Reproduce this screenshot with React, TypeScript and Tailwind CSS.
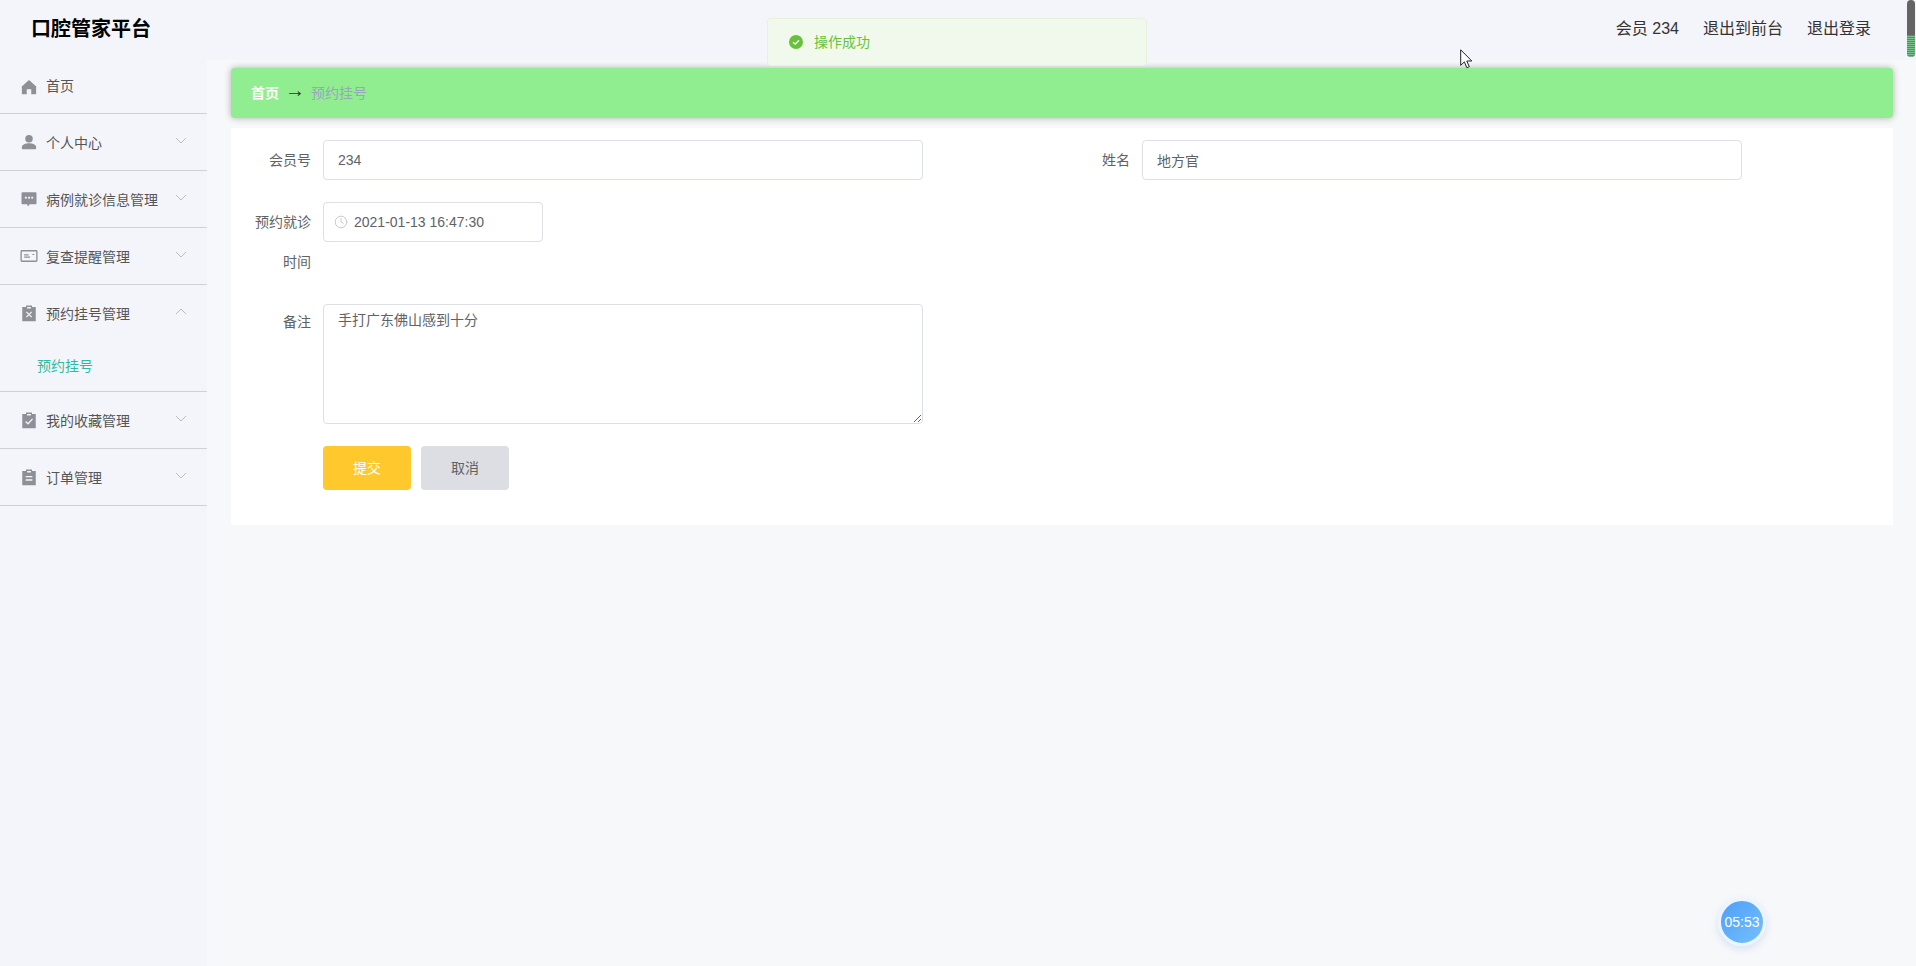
import { Clock } from "lucide-react";
import type { ReactNode } from "react";

const HomeIcon = () => (
  <svg viewBox="0 0 24 24" className="size-[18px] fill-[#8e9097]">
    <path d="M12 2.500 2 11.500 2.500 12.500V21.500h6.500v-6.500h6v6.500h6.500V12.500l.5-1z" />
  </svg>
);

const UserIcon = () => (
  <svg viewBox="0 0 24 24" className="size-[18px] fill-[#8e9097]">
    <circle cx="12" cy="7.500" r="5" />
    <path d="M2.500 20.500v-2c0-3.200 5-5 9.500-5s9.500 1.800 9.500 5v2c0 .6-.4 1-1 1h-17c-.6 0-1-.4-1-1z" />
  </svg>
);

const ChatIcon = () => (
  <svg viewBox="0 0 24 24" className="size-[18px]">
    <path
      className="fill-[#8e9097]"
      d="M3.500 3h17c.8 0 1.500.7 1.500 1.500v13c0 .8-.7 1.500-1.500 1.500H13l-2.500 3-1-3h-6C2.700 19 2 18.300 2 17.500v-13C2 3.700 2.700 3 3.500 3z"
    />
    <rect x="6.500" y="9" width="2.500" height="2.500" fill="#f4f5fa" />
    <rect x="10.800" y="9" width="2.500" height="2.500" fill="#f4f5fa" />
    <rect x="15" y="9" width="2.500" height="2.500" fill="#f4f5fa" />
  </svg>
);

const CardIcon = () => (
  <svg viewBox="0 0 24 24" className="size-[18px] fill-none stroke-[#8e9097]">
    <rect x="1.500" y="5" width="21" height="14" rx="1" strokeWidth="1.800" />
    <path d="M5.500 13.500h8M5.500 10.500h6M16.500 10h2.500" strokeWidth="1.600" />
  </svg>
);

function ClipboardIcon({ mark }: { mark: ReactNode }) {
  return (
    <svg viewBox="0 0 24 24" className="size-[18px]">
      <path
        className="fill-[#8e9097]"
        d="M3 4h5V2h8v2h5v19H3zM9.500 4v2h5V4z"
      />
      <g fill="none" stroke="#f4f5fa" strokeWidth="1.700">
        {mark}
      </g>
    </svg>
  );
}

function Chevron({ up }: { up?: boolean }) {
  return (
    <svg
      viewBox="0 0 12 7"
      className={
        up
          ? "mb-1 h-[7px] w-3 rotate-180 fill-none stroke-[#b4b6bc]"
          : "mb-1 h-[7px] w-3 fill-none stroke-[#b4b6bc]"
      }
    >
      <path d="M1 1l5 5 5-5" strokeWidth="0.9" />
    </svg>
  );
}

const menu = [
  { name: "个人中心", icon: <UserIcon /> },
  { name: "病例就诊信息管理", icon: <ChatIcon /> },
  { name: "复查提醒管理", icon: <CardIcon /> },
  {
    name: "预约挂号管理",
    icon: <ClipboardIcon mark={<path d="M8.500 10.500l7 7M15.500 10.500l-7 7" />} />,
    open: true,
    sub: "预约挂号",
  },
  {
    name: "我的收藏管理",
    icon: <ClipboardIcon mark={<path d="M7.500 14l3.200 3 6-6.500" />} />,
  },
  {
    name: "订单管理",
    icon: <ClipboardIcon mark={<path d="M7.500 11.500h9M7.500 16h9" />} />,
  },
];

function Sidebar() {
  return (
    <aside className="w-[207px] shrink-0 text-sm text-[#555]">
      <div className="flex h-[54px] items-center gap-2 border-b border-[#cfd1d7] pl-5">
        <HomeIcon />
        <span className="mb-[2px]">首页</span>
      </div>
      {menu.map((item) => (
        <div key={item.name} className="border-b border-[#cfd1d7]">
          <div className="flex h-[56px] items-center gap-2 pr-[20px] pl-5">
            {item.icon}
            <span className="mt-[1px] flex-1">{item.name}</span>
            <Chevron up={item.open} />
          </div>
          {item.sub && (
            <div className="flex h-[50px] items-center pb-[1px] pl-[37px] text-[#2fbaa0]">
              {item.sub}
            </div>
          )}
        </div>
      ))}
    </aside>
  );
}

function FormItem({
  label,
  className,
  children,
}: {
  label: string;
  className?: string;
  children: ReactNode;
}) {
  return (
    <div className={"flex " + (className ?? "")}>
      <label className="w-[80px] shrink-0 pr-3 text-right text-sm leading-[40px] text-[#606266]">
        {label}
      </label>
      {children}
    </div>
  );
}

const inputCls =
  "h-10 w-[600px] rounded border border-[#dcdfe6] bg-white px-[14px] text-sm text-[#606266] outline-none";

export default function App() {
  return (
    <div className="relative flex h-screen flex-col overflow-hidden bg-[#f4f5fa] font-['Liberation_Sans','Noto_Sans_CJK_SC',sans-serif]">
      <header className="flex h-[60px] shrink-0 items-center justify-between pr-[45px] pb-[3px] pl-[31px]">
        <h1 className="text-xl font-bold text-black">口腔管家平台</h1>
        <div className="flex gap-6 text-base text-[#333]">
          <span>会员&nbsp;234</span>
          <span>退出到前台</span>
          <span>退出登录</span>
        </div>
      </header>

      <div className="flex flex-1">
        <Sidebar />
        <main className="flex-1 bg-[#f7f8fa] pt-2 pr-[23px] pl-6">
          <div className="relative flex h-[50px] items-center rounded-sm bg-[#90ee90] px-5 text-sm shadow-[0_0_7px_rgba(0,0,0,0.3)]">
            <span className="font-bold text-white">首页</span>
            <span className="mx-[9px] mb-[6px] flex w-[14px] justify-center text-xl leading-none text-[#303133]">→</span>
            <span className="text-[#97a8be]">预约挂号</span>
          </div>

          <form className="mt-[10px] h-[397px] bg-white pt-3 pl-3">
            <div className="flex">
              <FormItem label="会员号" className="w-[819px]">
                <input readOnly value="234" className={inputCls} />
              </FormItem>
              <FormItem label="姓名">
                <input readOnly value="地方官" className={inputCls} />
              </FormItem>
            </div>

            <FormItem label="预约就诊时间" className="mt-[22px]">
              <div className="flex h-10 w-[220px] items-center gap-[6px] rounded border border-[#dcdfe6] pl-[10px] text-sm text-[#606266]">
                <Clock size={14} strokeWidth={1.500} className="text-[#c0c4cc]" />
                <span>2021-01-13 16:47:30</span>
              </div>
            </FormItem>

            <FormItem label="备注" className="mt-[22px] [&>label]:leading-[36px]">
              <textarea
                readOnly
                value="手打广东佛山感到十分"
                className="block h-[120px] w-[600px] rounded border border-[#dcdfe6] bg-white px-[14px] py-[3px] text-sm leading-[24px] text-[#606266] outline-none"
              />
            </FormItem>

            <div className="mt-[22px] flex gap-[10px] pl-[80px] text-sm">
              <button type="button" className="h-11 w-[88px] rounded bg-[#ffc92e] text-white">
                提交
              </button>
              <button type="button" className="h-11 w-[88px] rounded bg-[#dcdee3] text-[#606266]">
                取消
              </button>
            </div>
          </form>
        </main>
      </div>

      {/* message toast */}
      <div className="absolute top-[18px] left-[767px] flex h-[48px] w-[380px] items-center gap-[11px] rounded border border-[#e6f3dc] bg-[#f0f9eb] pl-[21px] text-sm text-[#67c23a]">
        <svg viewBox="0 0 14 14" className="size-[14px]">
          <circle cx="7" cy="7" r="7" fill="#67c23a" />
          <path d="M4 7.200 6.200 9.200 10 5.200" fill="none" stroke="#fff" strokeWidth="1.300" />
        </svg>
        <span>操作成功</span>
      </div>

      {/* mouse cursor */}
      <svg viewBox="0 0 13 20" className="absolute top-[49px] left-[1460px] h-5 w-[13px]">
        <path
          d="M.7.800v15.500l3.700-3.400 2.400 5.800 2.500-1-2.500-5.700h5z"
          fill="#fff"
          stroke="#222"
          strokeWidth="1"
        />
      </svg>

      {/* scroll thumb */}
      <div className="absolute top-0 right-px h-[57px] w-2 overflow-hidden rounded-full bg-[#646464]">
        <div className="absolute top-[35px] bottom-0 w-full bg-[repeating-linear-gradient(to_bottom,#3d9e57_0,#3d9e57_1px,#7cc08e_1px,#7cc08e_2px)]" />
      </div>

      {/* timer */}
      <div className="absolute top-[898px] left-[1718px] flex size-[48px] items-center justify-center rounded-full border-[3px] border-[#eaf5ff] bg-[linear-gradient(135deg,#4f9ff6,#74c0ff)] text-sm text-white shadow-[0_3px_8px_rgba(80,140,220,0.2)]">
        05:53
      </div>
    </div>
  );
}
